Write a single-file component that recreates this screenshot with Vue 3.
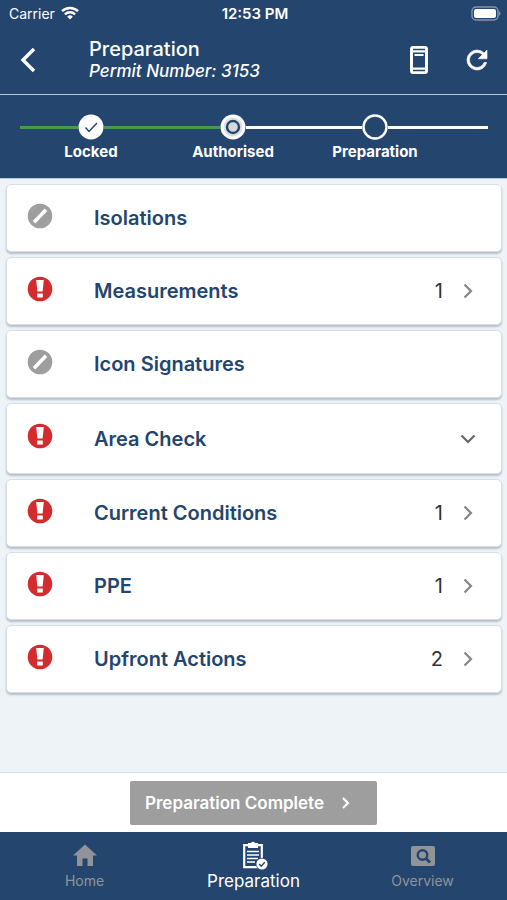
<script setup>
import { ref } from "vue";

const steps = [
  { name: "Locked", state: "done" },
  { name: "Authorised", state: "active" },
  { name: "Preparation", state: "todo" },
];

const sections = [
  { name: "Isolations", status: "none" },
  { name: "Measurements", status: "required", count: 1, arrow: "right" },
  { name: "Icon Signatures", status: "none" },
  { name: "Area Check", status: "required", arrow: "down" },
  { name: "Current Conditions", status: "required", count: 1, arrow: "right" },
  { name: "PPE", status: "required", count: 1, arrow: "right" },
  { name: "Upfront Actions", status: "required", count: 2, arrow: "right" },
];

const tabs = ["Home", "Preparation", "Overview"];
const activeTab = ref("Preparation");
</script>

<template>
  <div class="app">
    <header class="top">
      <div class="status">
        <div class="status-carrier">
          <span>Carrier</span>
          <svg width="18" height="14" viewBox="0 0 18 14" fill="none" stroke="#fff">
            <path d="M1 5.2a11.5 11.5 0 0 1 16 0" stroke-width="2.5" />
            <path d="M3.9 8.3a7.4 7.4 0 0 1 10.2 0" stroke-width="2.4" />
            <path d="M9 13.6 6.2 10.7a4 4 0 0 1 5.6 0z" fill="#fff" stroke="none" />
          </svg>
        </div>
        <span class="status-time">12:53 PM</span>
        <svg class="status-battery" width="31" height="15" viewBox="0 0 31 15">
          <rect x="2" y="1" width="26" height="13" rx="4" fill="none" stroke="#8494ad" stroke-width="1.4" />
          <rect x="4" y="3" width="22" height="9" rx="2" fill="#fff" />
          <path d="M29 5q3 2.500 0 5z" fill="#8494ad" />
        </svg>
      </div>

      <div class="bar">
        <button class="icon-button" aria-label="Back">
          <svg width="18" height="26" viewBox="0 0 18 26" fill="none" stroke="#fff" stroke-width="3.4">
            <path d="M15 2 4 13l11 11" />
          </svg>
        </button>
        <div class="bar-title">
          <h1>Preparation</h1>
          <p>Permit Number: 3153</p>
        </div>
        <button class="icon-button" aria-label="Device">
          <svg width="18" height="28" viewBox="0 0 18 28">
            <rect width="18" height="28" rx="3" fill="#fff" />
            <path d="M3 3.5h12M3 24.5h12" stroke="#24456d" stroke-width="1.3" />
            <rect x="3" y="6.5" width="12" height="15" fill="#24456d" />
            <path d="M4.5 9h9" stroke="#fff" stroke-width="2" />
          </svg>
        </button>
        <button class="icon-button" aria-label="Refresh">
          <svg width="30" height="30" viewBox="0 0 24 24" fill="#fff" stroke="#fff" stroke-width="0.5">
            <path d="M17.65 6.35A7.96 7.96 0 0 0 12 4a8 8 0 1 0 7.73 10h-2.08A6 6 0 1 1 12 6c1.66 0 3.14.69 4.22 1.78L13 11h7V4z" />
          </svg>
        </button>
      </div>

      <ol class="steps">
        <li v-for="step in steps" :key="step.name" class="step" :class="step.state">
          <div class="step-track">
            <i class="line before"></i>
            <svg width="26" height="26" viewBox="0 0 26 26" fill="none">
              <template v-if="step.state === 'done'">
                <circle cx="13" cy="13" r="12.5" fill="#fff" />
                <path d="m7.5 13.5 3.5 4 8-8.5" stroke="#24456d" stroke-width="1.5" />
              </template>
              <template v-else-if="step.state === 'active'">
                <circle cx="13" cy="13" r="12.5" fill="#fff" />
                <circle cx="13" cy="13" r="9.5" fill="#dcdfe4" />
                <circle cx="13" cy="13" r="6" fill="#d5d7dc" stroke="#24456d" stroke-width="2.4" />
              </template>
              <circle v-else cx="13" cy="13" r="11.5" stroke="#fff" stroke-width="2.4" />
            </svg>
            <i class="line after"></i>
          </div>
          <span>{{ step.name }}</span>
        </li>
        <li class="steps-end"><i class="line"></i></li>
      </ol>
    </header>

    <main class="list">
      <button
        v-for="section in sections"
        :key="section.name"
        class="card"
        :class="{ expandable: section.arrow === 'down' }"
      >
        <svg class="card-status" width="26" height="26" viewBox="0 0 26 26">
          <template v-if="section.status === 'none'">
            <circle cx="13" cy="13" r="12.3" fill="#9e9e9e" />
            <path d="m7 19.3 12-12.6" stroke="#fff" stroke-width="3.6" />
          </template>
          <template v-else>
            <circle cx="13" cy="13" r="12.3" fill="#d32b2e" />
            <path d="M9.2 4h7.6l-1.200 11.500h-5.200zM10.200 17.500h5.600v4h-5.600z" fill="#fff" />
          </template>
        </svg>
        <span class="card-name">{{ section.name }}</span>
        <span v-if="section.count" class="card-count">{{ section.count }}</span>
        <svg v-if="section.arrow" width="16" height="16" viewBox="0 0 16 16" fill="none" stroke-width="2.2">
          <path v-if="section.arrow === 'right'" d="m4.500 1.500 6.500 6.500-6.500 6.500" stroke="#858585" />
          <path v-else d="m1.500 4.500 6.500 6.500 6.500-6.500" stroke="#666" />
        </svg>
      </button>
    </main>

    <div class="action">
      <button class="complete">
        Preparation Complete
        <svg width="12" height="14" viewBox="0 0 12 14" fill="none" stroke="#fff" stroke-width="2.2">
          <path d="m3 2 5 5-5 5" />
        </svg>
      </button>
    </div>

    <nav class="tabs">
      <a
        v-for="tab in tabs"
        :key="tab"
        href="#"
        :class="{ current: tab === activeTab }"
        @click.prevent="activeTab = tab"
      >
        <svg v-if="tab === 'Home'" width="28" height="30" viewBox="0 0 28 30" fill="currentColor">
          <path d="M14 4.500 2 15.500h4V26h5.500v-7.500h5V26H22V15.500h4z" />
        </svg>
        <svg v-else-if="tab === 'Preparation'" width="28" height="30" viewBox="0 0 28 30" fill="none">
          <path d="M4.200 5.200h17.600v22H4.200z" stroke="currentColor" stroke-width="2.200" />
          <path d="M8 8V3h3a2.200 2.200 0 0 1 4 0h3v5z" fill="currentColor" />
          <path d="M7 11.500h12M7 15h12M7 18.500h11M7 22h8" stroke="currentColor" stroke-width="1.500" />
          <circle cx="22" cy="24" r="6.300" fill="#24456d" />
          <circle cx="22" cy="24" r="5.600" fill="currentColor" />
          <path d="m19.200 24 2 2.200 3.600-4" stroke="#24456d" stroke-width="1.400" />
        </svg>
        <svg v-else width="28" height="30" viewBox="0 0 28 30" fill="none">
          <rect x="2" y="6" width="24" height="20" rx="2" fill="currentColor" />
          <circle cx="13.500" cy="15" r="4.800" stroke="#24456d" stroke-width="2.400" />
          <path d="m17 18.500 4 4" stroke="#24456d" stroke-width="2.800" />
        </svg>
        <span>{{ tab }}</span>
      </a>
    </nav>
  </div>
</template>

<style>
body {
  margin: 0;
}
</style>

<style scoped>
.app {
  min-height: 100vh;
  display: flex;
  flex-direction: column;
  background-color: #eef3f8;
  color: #fff;
  font-family: Inter, "Liberation Sans", sans-serif;
}

.app svg {
  display: block;
  flex: none;
}

button {
  border: 0;
  padding: 0;
  font-family: inherit;
  cursor: pointer;
}

.top {
  background-color: #24456d;
  border-bottom: 1px solid #b4c8dc;
}

.status {
  height: 26px;
  padding: 0 6px 0 9px;
  display: grid;
  grid-template-columns: 1fr auto 1fr;
  align-items: center;
  font-size: 14px;
}
.status-carrier {
  display: flex;
  align-items: center;
  gap: 6px;
}
.status-time {
  font-size: 15px;
  font-weight: 600;
}
.status-battery {
  justify-self: end;
}

.bar {
  height: 68px;
  padding: 0 14px 0 12px;
  display: flex;
  align-items: center;
  gap: 26px;
}
.bar-title {
  flex: 1;
  padding-left: 19px;
}
.bar-title h1,
.bar-title p {
  margin: 0;
  line-height: 22px;
}
.bar-title h1 {
  font-size: 20px;
  font-weight: 500;
}
.bar-title p {
  font-size: 17px;
  font-style: italic;
  font-weight: 500;
}
.icon-button {
  width: 32px;
  height: 44px;
  display: flex;
  align-items: center;
  justify-content: center;
  background: none;
}

.steps {
  margin: 0;
  padding: 19px 19px 14px 20px;
  border-top: 1px solid #b4c8dc;
  display: flex;
  list-style: none;
}
.step {
  flex: 142;
  text-align: center;
  font-size: 15px;
  font-weight: 700;
  line-height: 24px;
}
.step-track,
.steps-end {
  height: 26px;
  display: flex;
  align-items: center;
}
.steps-end {
  flex: 42;
}
.line {
  flex: 1;
  height: 3px;
  background-color: #fff;
}
.done .line,
.active .before {
  background-color: #3f9c50;
}

.list {
  flex: 1;
  padding: 5px 5px 24px 6px;
  display: flex;
  flex-direction: column;
  gap: 5px;
}
.card {
  min-height: 68px;
  padding: 0 25px 0 20px;
  box-sizing: border-box;
  display: flex;
  align-items: center;
  gap: 17px;
  border: 1px solid #d3e0ea;
  border-radius: 5px;
  background-color: #fff;
  box-shadow: 0 2px 2px rgba(60, 75, 95, 0.3);
  text-align: left;
}
.card.expandable {
  min-height: 71px;
}
.card-status {
  margin-bottom: 5px;
}
.card-name {
  flex: 1;
  padding-left: 24px;
  color: #24456d;
  font-size: 20px;
  font-weight: 600;
}
.card-count {
  color: #333;
  font-size: 20px;
}

.action {
  padding: 8px 0 7px;
  border-top: 1px solid #d3e0f0;
  background-color: #fff;
  display: flex;
  justify-content: center;
}
.complete {
  height: 44px;
  padding: 0 25px 0 15px;
  display: flex;
  align-items: center;
  gap: 16px;
  border-radius: 2px;
  background-color: #9e9e9e;
  color: #fff;
  font-size: 17px;
  font-weight: 600;
}

.tabs {
  height: 68px;
  display: grid;
  grid-template-columns: repeat(3, 1fr);
  background-color: #24456d;
}
.tabs a {
  padding-top: 8px;
  display: flex;
  flex-direction: column;
  align-items: center;
  color: #909499;
  font-size: 14px;
  line-height: 22px;
  text-decoration: none;
}
.tabs a.current {
  color: #fff;
  font-size: 17px;
}
</style>
